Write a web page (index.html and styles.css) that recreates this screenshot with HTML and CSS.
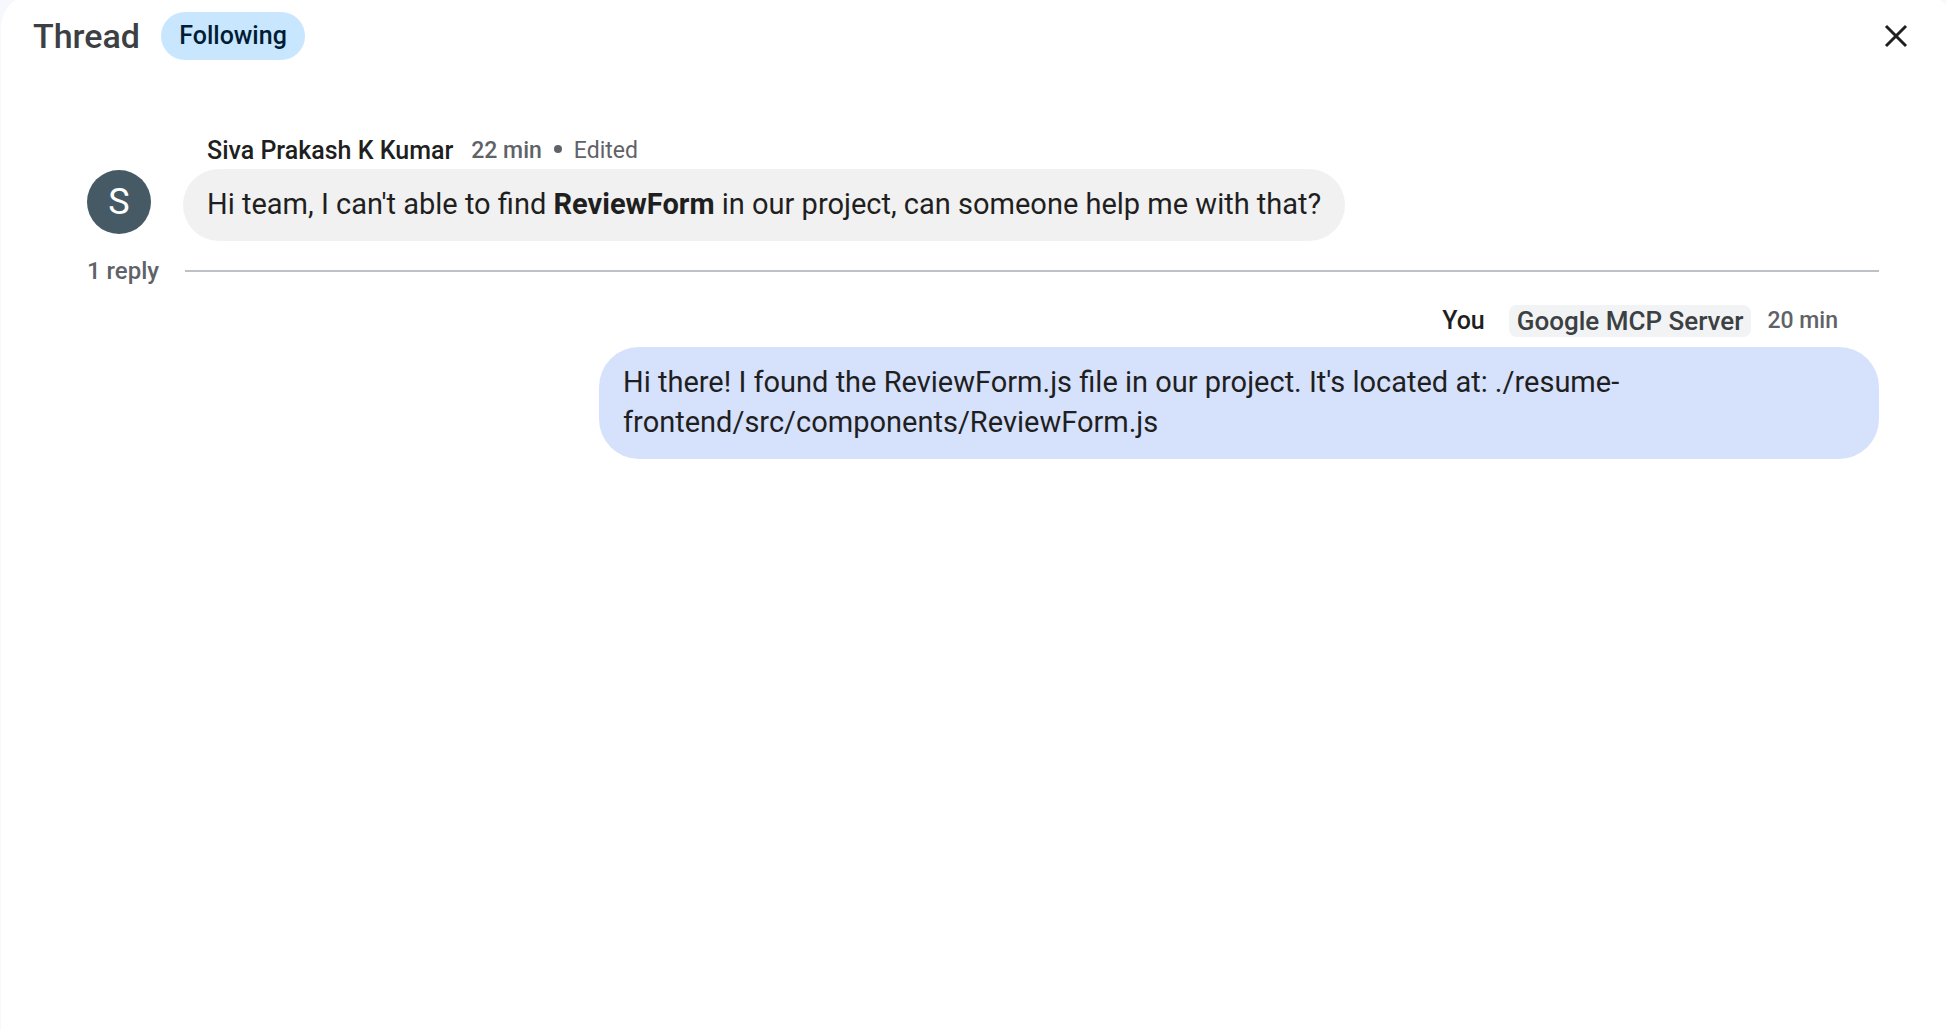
FILE: index.html
```html
<!DOCTYPE html>
<html lang="en">
<head>
<meta charset="utf-8">
<title>Thread</title>
<link rel="stylesheet" href="styles.css">
</head>
<body>
<main class="panel">
  <header class="panel-header">
    <h1 class="title">Thread</h1>
    <button class="following" type="button">Following</button>
    <button class="close" type="button" aria-label="Close">
      <svg width="24" height="24" viewBox="0 0 24 24" aria-hidden="true"><path d="M2 2L22 22M22 2L2 22" stroke="#1f1f1f" stroke-width="3" fill="none"/></svg>
    </button>
  </header>
  <section class="thread">
    <article class="message">
      <div class="avatar" aria-hidden="true">S</div>
      <div class="content">
        <div class="meta">
          <span class="name">Siva Prakash K Kumar</span>
          <time class="time">22 min</time>
          <span class="dot"></span>
          <span class="edited">Edited</span>
        </div>
        <p class="bubble">Hi team, I can't able to find <strong>ReviewForm</strong> in our project, can someone help me with that?</p>
      </div>
    </article>
    <div class="replies"><span class="count">1 reply</span><hr class="rule"></div>
    <article class="message own">
      <div class="meta">
        <span class="name">You</span>
        <span class="app">Google MCP Server</span>
        <time class="time">20 min</time>
      </div>
      <p class="bubble">Hi there! I found the ReviewForm.js file in our project. It's located at: ./resume-<wbr>frontend/src/components/ReviewForm.js</p>
    </article>
  </section>
</main>
</body>
</html>
```
FILE: styles.css
```css
* { box-sizing: border-box; }
body {
  margin: 0;
  background: #f6f8fd;
  color: #1f1f1f;
  font: 24px/32px Roboto, "Liberation Sans", sans-serif;
  overflow: hidden;
}
/* The panel's rounded top runs slightly past the top and right window edges */
.panel {
  min-height: calc(100vh + 5px);
  margin: -5px -9px 0 1px;
  padding: 5px 9px 0 0;
  background: #fff;
  border-radius: 32px 32px 0 0;
}
.panel-header {
  display: flex;
  align-items: center;
  height: 72px;
  padding: 0 32px 0 32px;
}
.title {
  margin: 0 21px 0 0;
  color: #3c4043;
  font-size: 34px;
  font-weight: 500;
}
button { border: 0; font: inherit; cursor: pointer; }
.following {
  width: 144px;
  height: 48px;
  padding: 0;
  border-radius: 24px;
  background: #c9e6ff;
  color: #001d35;
  font-size: 25px;
  font-weight: 500;
}
.close {
  display: grid;
  place-items: center;
  width: 36px;
  height: 36px;
  margin-left: auto;
  padding: 0;
  background: none;
}
.thread { padding: 61px 67px 0 86px; }
.message { display: flex; align-items: flex-end; }
.avatar {
  width: 64px;
  height: 64px;
  margin: 0 32px 7px 0;
  border-radius: 50%;
  background: #455a64;
  color: #fff;
  font-size: 36px;
  line-height: 64px;
  text-align: center;
}
.meta { display: flex; align-items: center; height: 36px; padding: 0 24px; }
.name { margin-right: 18px; font-size: 25px; font-weight: 500; }
.time { color: #5f6368; font-size: 23px; font-weight: 500; }
.dot { width: 8px; height: 8px; margin: 0 12px 5px; border-radius: 50%; background: #5f6368; }
.edited { color: #5f6368; font-size: 23px; }
.bubble {
  margin: 0;
  padding: 15px 24px 17px;
  border-radius: 36px;
  background: #f1f1f1;
  font-size: 29px;
  line-height: 40px;
}
.replies { display: flex; align-items: center; gap: 26px; margin-top: 14px; }
.count { color: #5f6368; font-weight: 500; }
.rule { flex: 1; height: 2px; margin: 0; border: 0; background: #bdc1c6; }
.own { flex-direction: column; margin-top: 18px; }
.own .meta { height: 42px; padding: 0 41px 10px 0; }
.own .name { margin-right: 24px; }
.app {
  margin-right: 16px;
  padding: 0 8px;
  border-radius: 8px;
  background: #f1f3f4;
  color: #3c4043;
  font-size: 26px;
  font-weight: 500;
}
.own .bubble { width: 1280px; max-width: 100%; border-radius: 40px; background: #d6e1fc; }
```
